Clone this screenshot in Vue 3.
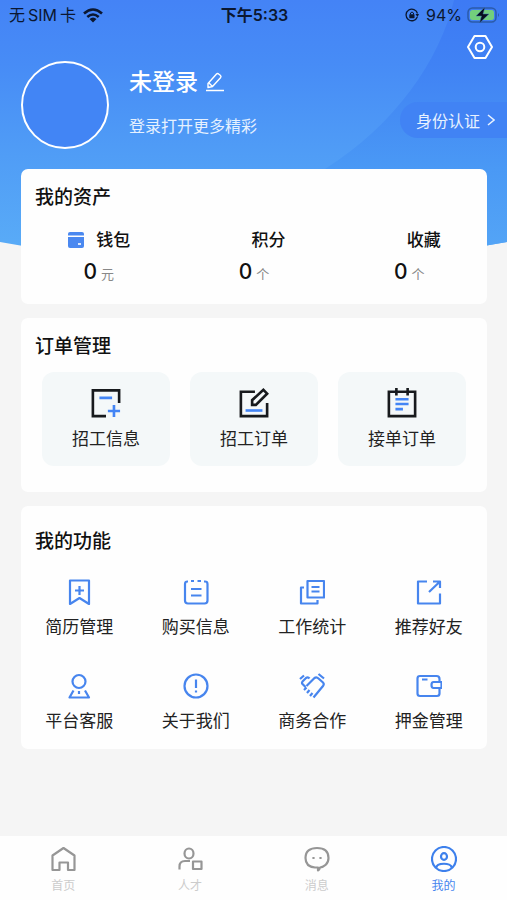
<script setup>
import { ref } from 'vue'

const assets = [
  { label: '钱包', value: 0, unit: '元', icon: true },
  { label: '积分', value: 0, unit: '个', icon: false },
  { label: '收藏', value: 0, unit: '个', icon: false },
]

// Each icon is a list of stroked paths on a 32-unit grid; "accent" strokes are blue.
const orders = [
  {
    label: '招工信息',
    paths: [
      { d: 'M30 16V2.500H2V30H16' },
      { d: 'M9 10.500H22.500M18 24.500H31M24.500 18V31', accent: true },
    ],
  },
  {
    label: '招工订单',
    paths: [
      { d: 'M17 4H2V30H30V16' },
      { d: 'M14 18V13L26 2L30 6L18 18Z' },
      { d: 'M7 24H25', accent: true },
    ],
  },
  {
    label: '接单订单',
    paths: [
      { d: 'M2 4H30V30H2ZM10 0V8M22 0V8' },
      { d: 'M9 12H23M9 17H23M9 22.500H17', accent: true },
    ],
  },
]

const features = [
  { label: '简历管理', d: 'M4 1.500H23V25L13.500 19L4 25ZM13.500 7V16M9 11.500H18' },
  { label: '购买信息', d: 'M5 2.500H4.500Q2 2.500 2 5V21.500Q2 24.500 5 24.500H21.500Q24.500 24.500 24.500 21.500V5Q24.500 2.500 22 2.500H21M8 2H11M14.500 2H18M8 10H18.500M8 16.500H18.500' },
  { label: '工作统计', d: 'M8.500 2H25V18.500H8.500ZM12.500 8H20.500M12.500 12.500H20.500M5 8.500H2V24.500H18.500V21' },
  { label: '推荐好友', d: 'M11 2.500H2V24.500H24V14.500M17 2.500H24V9M24 2.500L13 13' },
  { label: '平台客服', d: 'M19.500 8.500A6.500 6.500 0 1 1 6.500 8.500A6.500 6.500 0 1 1 19.500 8.500ZM7.500 17.500L3.500 24.500H23L19 17.500M13 18V21' },
  { label: '关于我们', d: 'M24.500 13A11.500 11.500 0 1 1 1.500 13A11.500 11.500 0 1 1 24.500 13ZM13 6.500V15M13 17.500V19.500' },
  { label: '商务合作', d: 'M6.500 14L3.500 11Q2.500 10 3.500 8.500L7 5Q9 3.500 10.500 5.500M7.500 13L15.500 5Q17.500 3.500 19.500 5.500L24 9.500Q25.500 11 24 13L14.500 24.500M1 6L5 2.500M19.500 1L25 5.500M5 17L7.500 14.500M8 20L10.500 17M11 23L13.500 20' },
  { label: '押金管理', d: 'M23.500 8.500V6Q23.500 3 20.500 3H4Q1.500 3 1.500 5.500V20.500Q1.500 23 4 23H21Q23.500 23 23.500 20.500V15.500M17.500 9H25.500V15H17.500Q15.500 15 15.500 12Q15.500 9 17.500 9ZM6 6.500H11.500' },
]

const tabs = [
  { label: '首页', d: 'M2.500 24V9.500L13.500 2L24.500 9.500V24H18V16.500H9.500V24Z' },
  { label: '人才', d: 'M16.500 7.500A4.500 5 0 1 1 7.500 7.500A4.500 5 0 1 1 16.500 7.500ZM2.500 23.500V20.500Q2.500 15 8 15H13M16 15.500H24.500V23H16Z' },
  { label: '消息', d: 'M16 21.500Q15 24.500 14 24.500V21.500H11C5 21 1.500 18 1.500 12C1.500 5 6 2 13 2S24.500 5 24.500 12C24.500 18 20 21 16 21.500ZM9.500 11V13M16.500 11V13' },
  { label: '我的', d: 'M25 13A12 12 0 1 1 1 13A12 12 0 1 1 25 13ZM16 10.500A3 3.300 0 1 1 10 10.500A3 3.300 0 1 1 16 10.500ZM5.500 21.500C5.500 16.500 20.500 16.500 20.500 21.500' },
]
const activeTab = ref('我的')
</script>

<template>
  <div class="page">
    <svg class="backdrop" viewBox="0 0 507 260" preserveAspectRatio="none" aria-hidden="true">
      <defs>
        <linearGradient id="sky" x1="0" y1="0" x2="0" y2="1">
          <stop offset="0" stop-color="#4483f6" />
          <stop offset="0.25" stop-color="#478cf6" />
          <stop offset="0.6" stop-color="#509df6" />
          <stop offset="1" stop-color="#5aadf7" />
        </linearGradient>
        <linearGradient id="glow" x1="0" y1="0" x2="0" y2="1">
          <stop offset="0" stop-color="#3d7af4" />
          <stop offset="0.25" stop-color="#4082f4" />
          <stop offset="0.45" stop-color="#458df4" />
          <stop offset="0.65" stop-color="#4a99f5" />
          <stop offset="1" stop-color="#55a6f6" />
        </linearGradient>
        <clipPath id="bowl"><path d="M0 0H507V242Q253 290 0 242Z" /></clipPath>
      </defs>
      <g clip-path="url(#bowl)">
        <rect width="507" height="260" fill="url(#sky)" />
        <path d="M454 0C440 60 395 125 325 169C290 190 260 205 230 215V260H507V0Z" fill="url(#glow)" />
      </g>
    </svg>

    <header class="hero">
      <div class="status">
        <div class="status-side">
          <span class="carrier"><span>无</span><span>SIM</span><span>卡</span></span>
          <svg class="wifi" viewBox="0 0 20 15" aria-hidden="true">
            <path d="M1 5.500Q10-2.500 19 5.500M4.300 9Q10 4 15.700 9" fill="none" stroke="#0b1730" stroke-width="2.600" />
            <path d="M6.500 11Q10 8 13.500 11L10 14.500Z" fill="#0b1730" />
          </svg>
        </div>
        <time class="clock">下午5:33</time>
        <div class="status-side status-right">
          <svg class="lock" viewBox="0 0 14 14" aria-hidden="true">
            <path d="M12.300 9A5.800 5.800 0 1 1 12.500 5.500" fill="none" stroke="#0b1730" stroke-width="1.300" />
            <path d="M10.500 6H14L12.500 9Z" fill="#0b1730" />
            <rect x="4.300" y="6.200" width="5.200" height="4" rx="0.600" fill="#0b1730" />
            <path d="M5.500 6.500V5Q7 3 8.500 5V6.500" fill="none" stroke="#0b1730" />
          </svg>
          <span>94%</span>
          <svg class="battery" viewBox="0 0 33 16" aria-hidden="true">
            <rect x="1" y="1" width="28" height="14" rx="4.500" fill="none" stroke="#2b5ba9" stroke-width="1.500" />
            <rect x="3" y="3" width="24" height="10" rx="2.500" fill="#72cf7c" />
            <path d="M31 6Q33 8 31 10Z" fill="#2b5ba9" />
            <path d="M18 0L9 9H14.500L12.500 16L22 7H16Z" fill="#07101d" stroke="#3f72b8" stroke-width="0.500" />
          </svg>
        </div>
      </div>

      <div class="tools">
        <button class="plain" type="button" aria-label="设置">
          <svg class="gear" viewBox="0 0 26 26" fill="none" stroke="#fff" stroke-width="2" stroke-linejoin="round">
            <path d="M7.500 2H18.500L25 13L18.500 24H7.500L1 13Z" />
            <circle cx="13" cy="13" r="4.300" />
          </svg>
        </button>
      </div>

      <div class="profile">
        <div class="avatar"></div>
        <div class="who">
          <div class="name-row">
            <h1>未登录</h1>
            <button class="plain" type="button" aria-label="编辑">
              <svg class="pen" viewBox="0 0 20 20" fill="none" stroke="#fff" stroke-width="1.400" stroke-linejoin="round">
                <path d="M3 15.500V11.500L11.500 2Q12.500 1 14 2.300L15.500 3.500Q16.500 4.500 15.500 5.700L7.500 14.500ZM4 11L7.500 14.500M1 18.500H19" />
              </svg>
            </button>
          </div>
          <p>登录打开更多精彩</p>
        </div>
        <button class="verify" type="button">
          身份认证
          <svg class="chevron" viewBox="0 0 8 12" fill="none" stroke="#e8f2ff" stroke-width="1.500" aria-hidden="true">
            <path d="M1 1L7 6L1 11" />
          </svg>
        </button>
      </div>
    </header>

    <main>
      <section class="card assets">
        <h2>我的资产</h2>
        <ul>
          <li v-for="a in assets" :key="a.label">
            <div class="asset-label">
              <span class="slot">
                <svg v-if="a.icon" viewBox="0 0 18 18" aria-hidden="true">
                  <path d="M1 4.500V3Q1 1 3 1H15Q17 1 17 3V4.500Z" fill="#4a88f0" />
                  <path d="M1 6H17V15Q17 17 15 17H3Q1 17 1 15Z" fill="#4a88f0" />
                  <path d="M11 13H14" stroke="#fff" stroke-width="1.600" />
                </svg>
              </span>
              <span>{{ a.label }}</span>
            </div>
            <div class="amount"><strong>{{ a.value }}</strong><small>{{ a.unit }}</small></div>
          </li>
        </ul>
      </section>

      <section class="card orders">
        <h2>订单管理</h2>
        <div class="tiles">
          <button v-for="o in orders" :key="o.label" type="button">
            <svg viewBox="0 0 32 32" fill="none" stroke-width="2.800" aria-hidden="true">
              <path v-for="p in o.paths" :key="p.d" :d="p.d" :class="p.accent ? 'accent' : 'ink'" />
            </svg>
            <span>{{ o.label }}</span>
          </button>
        </div>
      </section>

      <section class="card features">
        <h2>我的功能</h2>
        <div class="grid">
          <button v-for="f in features" :key="f.label" type="button">
            <svg viewBox="0 0 26 26" fill="none" aria-hidden="true"><path :d="f.d" /></svg>
            <span>{{ f.label }}</span>
          </button>
        </div>
      </section>
    </main>

    <nav class="tabbar">
      <a v-for="t in tabs" :key="t.label" href="#" :class="{ active: t.label === activeTab }" @click.prevent="activeTab = t.label">
        <svg viewBox="0 0 26 26" fill="none" aria-hidden="true"><path :d="t.d" /></svg>
        <span>{{ t.label }}</span>
      </a>
    </nav>
  </div>
</template>

<style>
body {
  background: #f5f5f5;
}
</style>

<style scoped>
.page {
  position: relative;
  display: flex;
  flex-direction: column;
  min-height: 100vh;
  background: #f5f5f5;
  color: #111;
  font-family: Inter, "Noto Sans CJK SC", sans-serif;
}
h1, h2, p, ul {
  margin: 0;
  padding: 0;
}
button {
  border: 0;
  padding: 0;
  background: none;
  color: inherit;
  font: inherit;
  cursor: pointer;
}
svg {
  display: block;
}
.backdrop {
  position: absolute;
  top: 0;
  left: 0;
  width: 100%;
  height: 260px;
}
.hero {
  position: relative;
  padding-bottom: 20px;
  color: #fff;
}
.status {
  display: grid;
  grid-template-columns: 1fr auto 1fr;
  align-items: center;
  height: 30px;
  padding: 0 7px 0 9px;
  color: #0b1730;
  font-size: 16px;
  line-height: 24px;
}
.status-side, .carrier {
  display: flex;
  align-items: center;
}
.status-side {
  gap: 7px;
}
.carrier {
  gap: 3px;
}
.status-right {
  justify-content: flex-end;
  gap: 5px;
}
.status-right .lock {
  margin-right: 2px;
}
.clock {
  font-weight: 600;
}
.wifi {
  width: 20px;
  height: 15px;
}
.lock {
  width: 14px;
  height: 14px;
}
.battery {
  width: 33px;
  height: 16px;
}
.tools {
  display: flex;
  justify-content: flex-end;
  padding: 4px 14px 1px;
}
.gear {
  width: 26px;
  height: 26px;
}
.profile {
  display: flex;
  align-items: flex-start;
  padding-left: 21px;
}
.avatar {
  box-sizing: border-box;
  width: 88px;
  height: 88px;
  border: 2px solid #fff;
  border-radius: 50%;
  background: #4285f5;
}
.who {
  flex: 1;
  padding: 5px 0 0 20px;
}
.name-row {
  display: flex;
  align-items: center;
  gap: 7px;
}
h1 {
  font-size: 23px;
  font-weight: 500;
  line-height: 32px;
}
.pen {
  width: 20px;
  height: 20px;
}
.who p {
  margin-top: 16px;
  font-size: 16px;
  line-height: 24px;
  color: #e6f1ff;
}
.verify {
  display: flex;
  align-items: center;
  align-self: flex-end;
  gap: 7px;
  height: 36px;
  margin-bottom: 11px;
  padding: 0 12px 0 16px;
  border-radius: 18px 0 0 18px;
  background: #4183f4;
  color: #e8f2ff;
  font-size: 16px;
}
.chevron {
  width: 8px;
  height: 12px;
}
main {
  position: relative;
  display: flex;
  flex-direction: column;
  gap: 14px;
  padding: 0 20px 24px 21px;
}
.card {
  border-radius: 7px;
  background: #fefefe;
}
h2 {
  padding-left: 14px;
  font-size: 19px;
  font-weight: 500;
  line-height: 28px;
}
.assets {
  padding: 15px 0 14px;
}
.assets ul {
  display: grid;
  grid-template-columns: repeat(3, 1fr);
  padding-top: 14px;
  list-style: none;
}
.assets li {
  display: flex;
  flex-direction: column;
  align-items: center;
  gap: 2px;
}
.asset-label {
  display: flex;
  align-items: center;
  gap: 11px;
  font-size: 17px;
  font-weight: 500;
  line-height: 28px;
}
.slot, .slot svg {
  width: 18px;
  height: 18px;
}
.amount {
  display: flex;
  align-items: baseline;
  gap: 4px;
  line-height: 31px;
}
.amount strong {
  font-size: 21px;
  font-weight: 500;
}
.amount small {
  font-size: 13px;
  color: #888;
}
.orders {
  padding: 15px 0 26px;
}
.tiles {
  display: grid;
  grid-template-columns: repeat(3, 1fr);
  gap: 20px;
  padding: 11px 21px 0;
}
.tiles button {
  display: flex;
  flex-direction: column;
  align-items: center;
  gap: 9px;
  padding: 16px 0 15px;
  border-radius: 12px;
  background: #f4f8f9;
  color: #222;
  font-size: 17px;
  line-height: 24px;
}
.tiles svg {
  width: 30px;
  height: 30px;
}
.ink {
  stroke: #171a1d;
}
.accent {
  stroke: #4385f5;
}
.features {
  padding: 22px 0 16px;
}
.grid {
  display: grid;
  grid-template-columns: repeat(4, 1fr);
  row-gap: 34px;
  padding-top: 23px;
}
.grid button {
  display: flex;
  flex-direction: column;
  align-items: center;
  gap: 10px;
  color: #222;
  font-size: 17px;
  line-height: 24px;
}
.grid svg, .tabbar svg {
  width: 26px;
  height: 26px;
  stroke: #4785ee;
  stroke-width: 2.2;
  stroke-linejoin: round;
}
.tabbar {
  position: relative;
  display: grid;
  grid-template-columns: repeat(4, 1fr);
  margin-top: auto;
  padding: 10px 0 4px;
  background: #fefefe;
}
.tabbar a {
  display: flex;
  flex-direction: column;
  align-items: center;
  gap: 4px;
  color: #ccc;
  font-size: 12px;
  line-height: 20px;
  text-decoration: none;
}
.tabbar svg {
  stroke: #969696;
}
.tabbar .active {
  color: #4785ee;
}
.tabbar .active svg {
  stroke: #3d80ec;
}
</style>
